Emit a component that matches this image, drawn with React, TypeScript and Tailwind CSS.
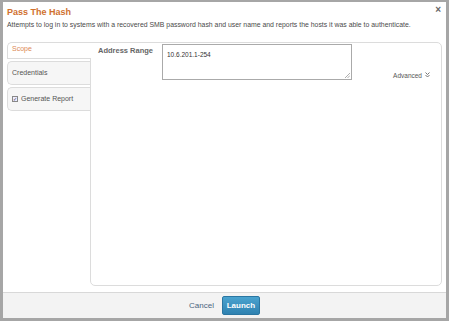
const tabs = [
  { label: "Scope", active: true },
  { label: "Credentials", active: false },
  { label: "Generate Report", active: false, check: true },
];

function Tab({ label, active, check }: { label: string; active: boolean; check?: boolean }) {
  if (active) {
    return (
      <div className="h-[17px] -mr-px rounded-tl-[5px] border-t border-l border-b border-[#dcdcdc] bg-white pl-[4px] flex items-start pt-[1px] text-[7px] text-[#dc8a55] relative z-10">
        {label}
      </div>
    );
  }
  return (
    <div className="mt-[2px] h-[24px] rounded-l-[5px] border-t border-l border-b border-[#dcdcdc] bg-[#f6f6f6] pl-[4px] flex items-center gap-[3px] text-[7px] text-[#555]">
      {check && (
        <span className="w-[6px] h-[6px] border border-[#888] bg-[#eef] flex items-center justify-center text-[5px] leading-none text-[#335]">
          ✓
        </span>
      )}
      {label}
    </div>
  );
}

export default function App() {
  return (
    <div className="w-[449px] h-[321px] border-x-[3px] border-t-2 border-b-[3px] border-[#a6a6a6] bg-white flex flex-col relative font-['Liberation_Sans',Arial,sans-serif]">
      <div className="absolute right-[5px] top-[3px] text-[10px] font-bold leading-none text-[#666]">×</div>

      <div className="px-[4px]">
        <div className="mt-[4px] h-[12px] leading-[12px] text-[9px] font-bold text-[#d0702e]">Pass The Hash</div>
        <div className="mt-[1px] h-[12px] leading-[12px] text-[6.9px] text-[#4a4a4a] whitespace-nowrap">
          Attempts to log in to systems with a recovered SMB password hash and user name and reports the hosts it was able to authenticate.
        </div>
      </div>

      <div className="mt-[11px] px-[4px] flex h-[244px]">
        <div className="w-[83px] flex flex-col">
          {tabs.map((t) => (
            <Tab key={t.label} {...t} />
          ))}
        </div>
        <div className="flex-1 rounded-[5px] rounded-tl-none border border-[#dcdcdc] bg-white flex pt-[1px]">
          <div className="w-[71px] pl-[7px] pt-[1px] text-[7.5px] font-bold text-[#666]">Address Range</div>
          <div className="flex flex-col">
            <div className="relative w-[190px] h-[36px] border border-[#aaa] bg-white px-[4px] pt-[5px] text-[6.5px] text-[#333]">
              10.6.201.1-254
              <svg className="absolute right-[1px] bottom-[1px]" width="6" height="6" viewBox="0 0 6 6">
                <path d="M1 6 L6 1 M3.5 6 L6 3.5" stroke="#999" strokeWidth="0.8" />
              </svg>
            </div>
          </div>
          <div className="flex-1 flex justify-end pr-[11px] pt-[27px]">
            <span className="flex items-start gap-[3px] text-[6.5px] text-[#555] h-[10px]">
              Advanced
              <svg className="mt-[1px]" width="5" height="6" viewBox="0 0 5 6">
                <path d="M0.5 0.5 L2.5 2.5 L4.5 0.5 M0.5 3 L2.5 5 L4.5 3" fill="none" stroke="#666" strokeWidth="0.9" />
              </svg>
            </span>
          </div>
        </div>
      </div>

      <div className="mt-[6px] flex-1 border-t border-[#d8d8d8] bg-[#f3f3f3] flex items-center justify-center gap-[8px]">
        <span className="text-[8px] text-[#4a6580]">Cancel</span>
        <button className="h-[19px] w-[38px] rounded-[2px] bg-gradient-to-b from-[#4aa3cf] to-[#2f82b1] border border-[#2a76a2] text-white text-[8px] font-bold">
          Launch
        </button>
      </div>
    </div>
  );
}
